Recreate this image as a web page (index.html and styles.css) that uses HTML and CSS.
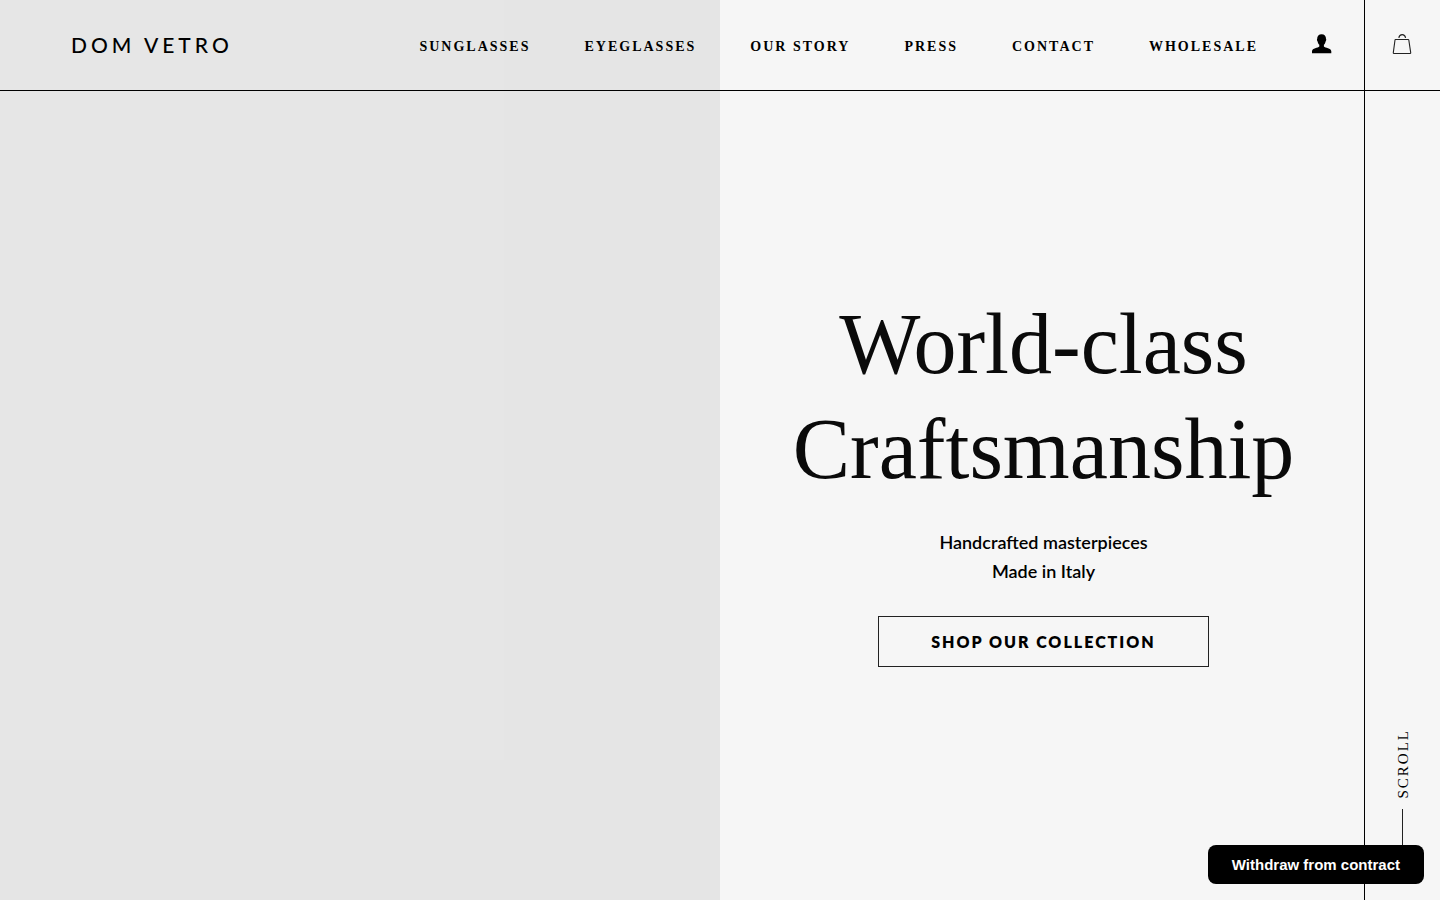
FILE: index.html
```html
<!DOCTYPE html>
<html lang="en">
<head>
<meta charset="utf-8">
<meta name="viewport" content="width=device-width, initial-scale=1">
<title>Dom Vetro</title>
<link rel="stylesheet" href="styles.css">
</head>
<body>
<div class="page">
  <div class="main">
    <header class="header">
      <a class="logo" href="#">DOM VETRO</a>
      <nav class="nav">
        <a href="#">SUNGLASSES</a>
        <a href="#">EYEGLASSES</a>
        <a href="#">OUR STORY</a>
        <a href="#">PRESS</a>
        <a href="#">CONTACT</a>
        <a href="#">WHOLESALE</a>
        <a class="account" href="#" aria-label="Account">
          <svg width="20" height="20" viewBox="0 0 20 20"><path d="M9.6 0.3C6.8 0.3 5.1 2.1 5.2 4.8C4.8 5 4.9 7 5.6 7.4C5.9 9 6.5 10 7.3 10.7V12.4C6.1 13.9 0.1 13.8 0 17.3V19.2H19.3V17.3C19.2 13.8 13.1 13.9 11.9 12.4V10.7C12.7 10 13.3 9 13.6 7.4C14.3 7 14.4 5 14 4.8C14.1 2.1 12.4 0.3 9.6 0.3Z" fill="#000"/></svg>
        </a>
      </nav>
    </header>
    <main class="hero">
      <section class="hero-copy">
        <h1>World-class<br>Craftsmanship</h1>
        <p>Handcrafted masterpieces<br>Made in Italy</p>
        <a class="shop" href="#">SHOP OUR COLLECTION</a>
      </section>
    </main>
  </div>
  <aside class="rail">
    <a class="bag" href="#" aria-label="Shopping bag">
      <svg width="20" height="20" viewBox="0 0 20 20" fill="none" stroke="#222" stroke-width="1.1"><path d="M3.4 5.5H16.2Q16.7 5.5 16.8 6L18.7 18.6Q18.8 19.5 18 19.5H2Q1.2 19.5 1.3 18.6L3 6Q3.1 5.5 3.4 5.5Z"/><path d="M6.8 3.8C7.2 1.7 8.4 0.6 10.2 0.6S13.2 1.7 13.6 3.8"/></svg>
    </a>
    <div class="scroll"><span class="scroll-label">SCROLL</span><span class="scroll-line"></span></div>
  </aside>
</div>
<button class="withdraw" type="button">Withdraw from contract</button>
</body>
</html>
```

FILE: styles.css
```css
* { box-sizing: border-box; }
body {
  margin: 0;
  color: #000;
  font-family: "Liberation Serif", serif;
}
a { color: inherit; text-decoration: none; }
svg { display: block; }

.page {
  display: flex;
  min-height: 100vh;
  background:
    linear-gradient(#e6e6e6, #e6e6e6) 0 0 / 35% 760px no-repeat,
    linear-gradient(#e5e5e5, #e5e5e5) 0 0 / 50% 100% no-repeat,
    #f6f6f6;
}
.main { flex: 1; display: flex; flex-direction: column; }

.header {
  display: flex;
  align-items: center;
  justify-content: space-between;
  height: 91px;
  padding: 2px 32px 0 71px;
  border-bottom: 1px solid #000;
}
.logo {
  font: 500 21px/24px Lato, sans-serif;
  letter-spacing: 4px;
  white-space: nowrap;
  padding-bottom: 2px;
}
.nav {
  display: flex;
  align-items: center;
  gap: 54px;
  font-size: 14px;
  line-height: 22px;
  font-weight: 700;
  letter-spacing: 2px;
  white-space: nowrap;
}
.nav a { padding-top: 2px; }
.nav .account { padding: 0 0 4px; }

.hero {
  flex: 1;
  display: grid;
  grid-template-columns: 50vw 1fr;
  align-items: center;
  padding-bottom: 32px;
}
.hero-copy {
  grid-column: 2;
  display: flex;
  flex-direction: column;
  align-items: center;
  text-align: center;
  padding-left: 3px;
}
h1 {
  margin: 0 0 26px;
  font-size: 86px;
  line-height: 105px;
  font-weight: 400;
  color: #0a0a0a;
}
.hero-copy p {
  margin: 0 0 30px;
  font: 600 18px/29px Lato, sans-serif;
}
.shop {
  padding: 0 52px;
  border: 1px solid #222;
  font: 800 16px/49px Lato, sans-serif;
  letter-spacing: 2px;
}

.rail {
  display: flex;
  flex-direction: column;
  justify-content: space-between;
  width: 76px;
  border-left: 1px solid #000;
}
.bag {
  display: flex;
  align-items: center;
  justify-content: center;
  height: 91px;
  padding: 0 2px 2px 0;
  border-bottom: 1px solid #000;
}
.scroll {
  display: flex;
  flex-direction: column;
  align-items: center;
  gap: 10px;
  padding-bottom: 31px;
}
.scroll-label {
  writing-mode: vertical-rl;
  transform: rotate(180deg);
  font-size: 15px;
  line-height: 18px;
  letter-spacing: 2px;
}
.scroll-line { width: 1px; height: 60px; background: #222; }

.withdraw {
  position: fixed;
  right: 16px;
  bottom: 16px;
  padding: 10px 24px;
  border: 0;
  border-radius: 8px;
  background: #000;
  color: #fff;
  font: 700 15px/19px "Liberation Sans", sans-serif;
  cursor: pointer;
}
```
